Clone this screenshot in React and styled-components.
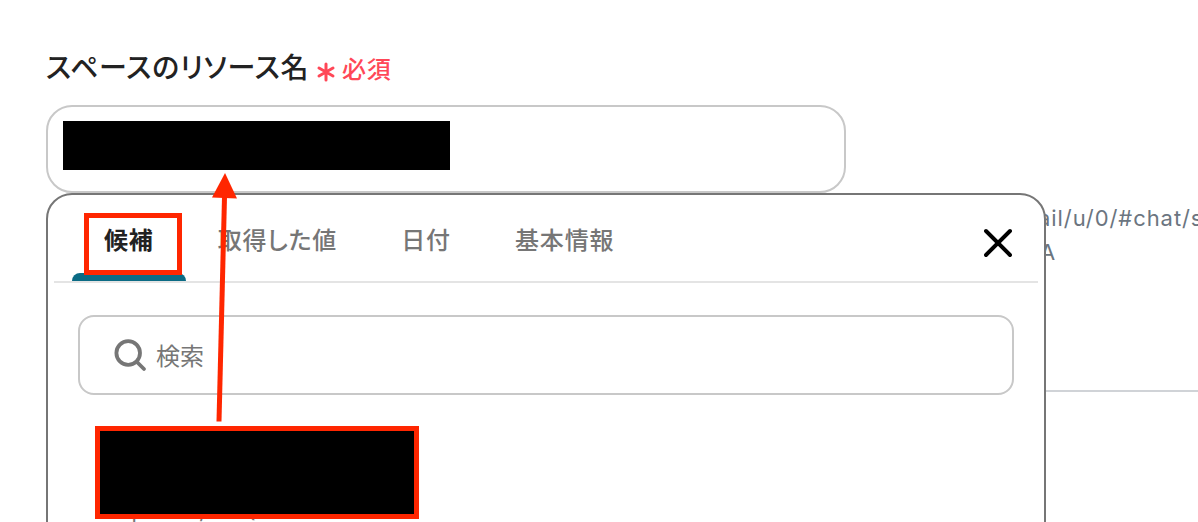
import styled, { createGlobalStyle } from "styled-components";

const GlobalStyle = createGlobalStyle`
  * {
    box-sizing: border-box;
  }
  body {
    margin: 0;
    overflow: hidden;
    background: #fff;
    font-family: Inter, "Noto Sans CJK JP", sans-serif;
    font-feature-settings: "palt";
  }
`;

const Page = styled.div`
  position: relative;
  height: 522px;
  padding: 48px 0 0 46px;
  overflow: hidden;
`;

const LabelRow = styled.div`
  display: flex;
  align-items: center;
  height: 41px;
`;

const Label = styled.label`
  width: 263px;
  margin-bottom: 2px;
  font-size: 28px;
  line-height: 40px;
  font-weight: 500;
  letter-spacing: 0.028em;
  white-space: nowrap;
  color: #222;
`;

const Required = styled.span`
  display: flex;
  align-items: center;
  gap: 6px;
  margin: 3px 0 0 7px;
  font-size: 24px;
  line-height: 36px;
  font-weight: 500;
  letter-spacing: 0.03em;
  color: #ff4757;

  svg {
    margin-top: 4px;
  }
`;

const Field = styled.div`
  width: 800px;
  height: 88px;
  margin-top: 16px;
  padding: 14px 15px;
  border: 2px solid #c8c8c8;
  border-radius: 26px;
`;

const FieldValue = styled.div`
  width: 387px;
  height: 49px;
  background: #000;
`;

const Help = styled.div`
  height: 199px;
  padding: 8px 0 0 992px;
  border-bottom: 2px solid #d0d3d7;
  font-size: 22px;
  line-height: 34px;
  letter-spacing: 0.042em;
  white-space: nowrap;
  color: #6b7580;
`;

const HelpLine = styled.div`
  padding-left: ${(props) => props.$indent || 0}px;
`;

const Popup = styled.div`
  position: absolute;
  top: 193px;
  left: 46px;
  width: 1000px;
  height: 360px;
  padding: 0 6px;
  border: 2px solid #767676;
  border-radius: 26px;
  background: #fff;
`;

const PopupHeader = styled.div`
  display: flex;
  align-items: center;
  justify-content: space-between;
  height: 88px;
  padding: 0 24px 0 18px;
  border-bottom: 2px solid #e4e4e4;
`;

const Tabs = styled.div`
  display: flex;
  height: 86px;
`;

const Tab = styled.div`
  display: flex;
  flex-direction: column;
  justify-content: space-between;
  padding-top: 28px;
  font-size: 24px;
  line-height: 36px;
  letter-spacing: 0.036em;
  color: ${(props) => (props.$active ? "#222" : "#767676")};

  span {
    padding: 0 32px;
    font-weight: ${(props) => (props.$active ? 700 : 500)};
  }

  &::after {
    content: "";
    height: 8px;
    border-radius: 8px 8px 0 0;
    background: ${(props) => (props.$active ? "#0b6b85" : "transparent")};
  }
`;

const CloseButton = styled.button`
  display: flex;
  margin-top: 9px;
  padding: 0;
  border: 0;
  background: none;
`;

const SearchBox = styled.div`
  display: flex;
  align-items: center;
  gap: 8px;
  height: 80px;
  margin: 32px 24px 0;
  padding-left: 33px;
  border: 2px solid #c8c8c8;
  border-radius: 16px;
  font-size: 24px;
  line-height: 36px;
  color: #767676;

  span {
    padding-top: 3px;
  }
`;

const Candidate = styled.div`
  padding: 31px 0 0 41px;
`;

const CandidateName = styled.div`
  width: 324px;
  height: 93px;
  position: relative;
  border: 5px solid #ff2600;
  background: #000;
`;

const CandidateId = styled.div`
  margin: -23px 0 0 24px;
  font-size: 22px;
  line-height: 30px;
  letter-spacing: 0.045em;
  color: #767676;
`;

const Highlight = styled.div`
  position: absolute;
  top: 213px;
  left: 84px;
  width: 98px;
  height: 62px;
  border: 5px solid #ff2600;
`;

const Arrow = styled.svg`
  position: absolute;
  top: 170px;
  left: 205px;
`;

const tabs = ["候補", "取得した値", "日付", "基本情報"];

const App = () => {
  return (
    <Page>
      <GlobalStyle />
      <LabelRow>
        <Label>スペースのリソース名</Label>
        <Required>
          <svg width="20" height="20" viewBox="0 0 20 20" fill="none" stroke="currentColor" strokeWidth="3" strokeLinecap="round">
            <path d="M10 2v16M3 6l14 8M17 6L3 14" />
          </svg>
          必須
        </Required>
      </LabelRow>
      <Field>
        <FieldValue />
      </Field>
      <Help>
        <HelpLine>ail/u/0/#chat/s</HelpLine>
        <HelpLine $indent={2}>A</HelpLine>
      </Help>
      <Popup>
        <PopupHeader>
          <Tabs>
            {tabs.map((tab, i) => (
              <Tab key={tab} $active={i === 0}>
                <span>{tab}</span>
              </Tab>
            ))}
          </Tabs>
          <CloseButton aria-label="close">
            <svg width="32" height="32" viewBox="0 0 32 32" fill="none" stroke="#000" strokeWidth="3.9" strokeLinecap="round">
              <path d="M4 4l24 24M28 4L4 28" />
            </svg>
          </CloseButton>
        </PopupHeader>
        <SearchBox>
          <svg width="35" height="35" viewBox="0 0 35 35" fill="none" stroke="#767676" strokeWidth="3.8" strokeLinecap="round">
            <circle cx="15.200" cy="15" r="11.800" />
            <path d="M24 24l7 7" />
          </svg>
          <span>検索</span>
        </SearchBox>
        <Candidate>
          <CandidateName />
          <CandidateId>spaces/AAQA</CandidateId>
        </Candidate>
      </Popup>
      <Highlight />
      <Arrow width="40" height="256" viewBox="0 0 40 256">
        <path d="M14 251.500L19.500 27" stroke="#ff2600" strokeWidth="5" />
        <path d="M20 3L32 28.500L7 27.500Z" fill="#ff2600" />
      </Arrow>
    </Page>
  );
};

export default App;
